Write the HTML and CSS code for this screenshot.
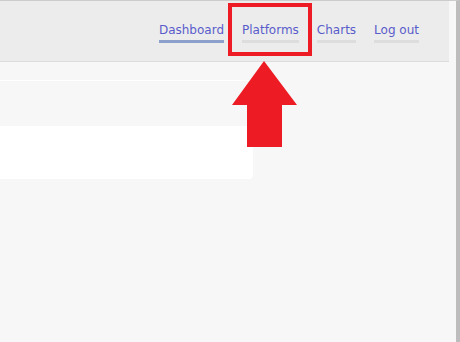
FILE: index.html
```html
<!DOCTYPE html>
<html lang="en">
<head>
    <meta charset="UTF-8">
    <meta name="viewport" content="width=device-width, initial-scale=1.0">
    <title>Platforms</title>
    <link rel="stylesheet" href="styles.css">
</head>
<body>

<div class="page">

    <!-- Top bar -->
    <header class="topbar">
        <nav class="nav">
            <a href="#" class="nav-link active">Dashboard</a>
            <a href="#" class="nav-link">Platforms</a>
            <a href="#" class="nav-link">Charts</a>
            <a href="#" class="nav-link">Log out</a>
        </nav>
    </header>

    <!-- Content -->
    <main class="content">
        <div class="rule"></div>
        <div class="card"></div>
    </main>

    <!-- Annotation -->
    <div class="highlight"></div>
    <svg class="arrow" width="66" height="87" viewBox="0 0 66 87">
        <polygon points="32,0 0,44 15,44 15,86 50,86 50,44 65,44" fill="#ed1c24"/>
    </svg>
</div>

</body>
</html>
```

FILE: styles.css
```css
* {
    margin: 0;
    padding: 0;
    box-sizing: border-box;
}

body {
    font-family: "DejaVu Sans", sans-serif;
    background: #f7f7f7;
    width: 460px;
    height: 342px;
    overflow: hidden;
}

.page {
    position: relative;
    height: 342px;
    border-top: 1px solid #cccccc;
    border-right: 4px solid #bdbdbd;
}

/* Top bar */
.topbar {
    width: 449px;
    height: 61px;
    background: #ececec;
    border-bottom: 1px solid #dcdcdc;
    display: flex;
    justify-content: flex-end;
    padding: 22px 30px 0 0;
}

.nav {
    display: flex;
    gap: 18px;
    align-items: flex-start;
}

.nav-link {
    font-size: 12px;
    line-height: 14px;
    color: #5a5ccb;
    text-decoration: none;
    padding-bottom: 3px;
    border-bottom: 3px solid #dddddd;
}

.nav-link.active {
    border-bottom-color: #8d9fcb;
}

/* Content */
.content {
    padding-top: 18px;
}

.rule {
    width: 253px;
    height: 1px;
    background: #ffffff;
}

.card {
    width: 253px;
    height: 53px;
    margin-top: 45px;
    background: #ffffff;
    border-radius: 0 4px 4px 0;
}

/* Annotation */
.highlight {
    position: absolute;
    left: 228px;
    top: 2px;
    width: 84px;
    height: 53px;
    border: 4px solid #ed1c24;
}

.arrow {
    position: absolute;
    left: 232px;
    top: 60px;
}
```
